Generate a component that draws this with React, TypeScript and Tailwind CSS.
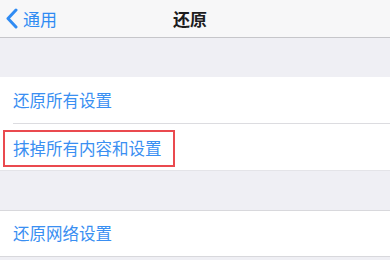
import React from "react";

export default function App() {
  return (
    <div
      className="w-[390px] h-[260px] overflow-hidden bg-[#efeff4] flex flex-col"
      style={{ fontFamily: '"Noto Sans CJK SC", "Noto Sans", sans-serif' }}
    >
      <div className="h-[38px] shrink-0 bg-[#f7f7f8] border-b border-[#c6c6ca] relative flex items-center">
        <div className="flex items-center pl-[5px] gap-[5px] text-[#2f8bf3]">
          <svg width="13" height="21" viewBox="0 0 13 21" fill="none">
            <path d="M11 2 L3 10.5 L11 19" stroke="#2f8bf3" strokeWidth="3" strokeLinecap="round" strokeLinejoin="round" />
          </svg>
          <span className="text-[17px] leading-none">通用</span>
        </div>
        <div className="absolute left-0 right-0 top-0 bottom-0 flex items-center justify-center pr-[10px]">
          <span className="text-[17px] leading-none font-semibold text-[#1c1c1e]">还原</span>
        </div>
      </div>
      <div className="h-[39px] shrink-0" />
      <div className="bg-white shrink-0 flex flex-col">
        <div className="h-[46px] flex items-center pl-[13px] text-[16.5px] text-[#3a8ff2]">还原所有设置</div>
        <div className="ml-[13px] h-px bg-[#dcdce0]" />
        <div className="h-[46px] flex items-center pl-[3px]">
          <div className="w-[172px] h-[37px] border-2 border-[#ea4a4f] flex items-center pl-[8px] text-[16.5px] text-[#3a8ff2] mt-[2px]">
            抹掉所有内容和设置
          </div>
        </div>
      </div>
      <div className="h-[40px] shrink-0 border-t border-[#e4e4e8]" />
      <div className="h-[47px] shrink-0 bg-white border-y border-[#d8d8dc] flex items-center pl-[13px] text-[16.5px] text-[#3a8ff2]">
        还原网络设置
      </div>
    </div>
  );
}
